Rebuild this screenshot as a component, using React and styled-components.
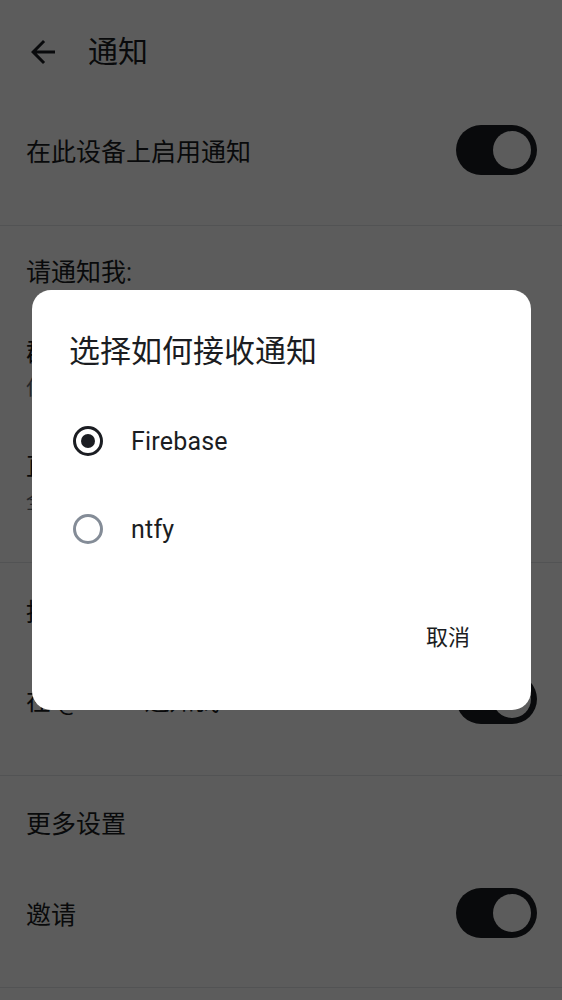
import React, { useState } from 'react';
import styled, { createGlobalStyle } from 'styled-components';

const GlobalStyle = createGlobalStyle`
  html, body {
    margin: 0;
    padding: 0;
    background: #ffffff;
  }
  body {
    font-family: Roboto, "Noto Sans CJK SC", sans-serif;
    color: #1b1d22;
  }
  * {
    box-sizing: border-box;
  }
`;

const Page = styled.div`
  width: 562px;
  height: 1000px;
  overflow: hidden;
  background: #ffffff;
`;

const TopBar = styled.div`
  display: flex;
  align-items: center;
  height: 104px;
  padding-left: 25px;

  .title {
    margin-left: 27px;
    font-size: 30px;
    line-height: 40px;
  }
`;

const BackButton = styled.div`
  display: flex;
  width: 36px;
  height: 36px;
`;

const Section = styled.div`
  border-bottom: 1px solid #e4e6e9;
  padding-bottom: ${(p) => p.$bottom}px;
`;

const SectionLabel = styled.div`
  display: flex;
  align-items: center;
  height: ${(p) => p.$height}px;
  padding-left: 26px;
  font-size: 25px;
`;

const SwitchRow = styled.div`
  display: flex;
  align-items: center;
  justify-content: space-between;
  height: ${(p) => p.$height}px;
  padding: 0 25px 0 26px;
  font-size: 25px;
`;

const Toggle = styled.div`
  display: flex;
  align-items: center;
  justify-content: ${(p) => (p.$on ? 'flex-end' : 'flex-start')};
  width: 81px;
  height: 50px;
  padding: 0 6px;
  border-radius: 25px;
  background: #1b1d22;

  &::after {
    content: '';
    width: 38px;
    height: 38px;
    border-radius: 50%;
    background: #ffffff;
  }
`;

const Item = styled.div`
  display: flex;
  flex-direction: column;
  padding: 22px 26px;

  .title {
    font-size: 25px;
    line-height: 34px;
  }
  .subtitle {
    font-size: 20px;
    line-height: 36px;
    color: #656c76;
  }
`;

const Scrim = styled.div`
  position: fixed;
  inset: 0;
  display: flex;
  align-items: center;
  justify-content: center;
  background: rgba(0, 0, 0, 0.64);
`;

const Dialog = styled.div`
  display: flex;
  flex-direction: column;
  width: 499px;
  height: 420px;
  margin-left: 1px;
  padding-top: 42px;
  border-radius: 19px;
  background: #ffffff;
`;

const DialogTitle = styled.div`
  padding-left: 37px;
  font-size: 31px;
  line-height: 40px;
  color: #1b1d22;
  margin-bottom: 25px;
`;

const Option = styled.div`
  display: flex;
  align-items: center;
  height: 88px;
  padding-left: 41px;
  font-size: 25px;
  letter-spacing: 0.2px;
  color: #1b1d22;
  cursor: pointer;
`;

const Radio = styled.div`
  display: flex;
  align-items: center;
  justify-content: center;
  width: 30px;
  height: 30px;
  margin-right: 28px;
  border-radius: 50%;
  border: 3.4px solid ${(p) => (p.$checked ? '#1b1d22' : '#848c97')};

  &::after {
    content: '';
    display: ${(p) => (p.$checked ? 'block' : 'none')};
    width: 14px;
    height: 14px;
    border-radius: 50%;
    background: #1b1d22;
  }
`;

const Actions = styled.div`
  display: flex;
  justify-content: flex-end;
  margin-top: 38px;
  padding-right: 49px;
`;

const TextButton = styled.div`
  display: flex;
  align-items: center;
  height: 48px;
  padding: 0 12px;
  font-size: 22px;
  color: #1b1d22;
  cursor: pointer;
`;

const options = ['Firebase', 'ntfy'];

export default function App() {
  const [choice, setChoice] = useState('Firebase');

  return (
    <Page>
      <GlobalStyle />
      <TopBar>
        <BackButton>
          <svg width="36" height="36" viewBox="0 0 24 24" fill="#1b1d22">
            <path d="M20 11H7.83l5.59-5.59L12 4l-8 8 8 8 1.41-1.41L7.83 13H20v-2z" />
          </svg>
        </BackButton>
        <div className="title">通知</div>
      </TopBar>

      <Section $bottom={29}>
        <SwitchRow $height={92}>
          在此设备上启用通知
          <Toggle $on />
        </SwitchRow>
      </Section>

      <Section $bottom={20}>
        <SectionLabel $height={88}>请通知我:</SectionLabel>
        <Item>
          <div className="title">群组聊天</div>
          <div className="subtitle">仅提及和关键词</div>
        </Item>
        <Item>
          <div className="title">直接聊天</div>
          <div className="subtitle">全部消息</div>
        </Item>
      </Section>

      <Section $bottom={34}>
        <SectionLabel $height={94}>提及</SectionLabel>
        <SwitchRow $height={84}>
          在 @room 通知我
          <Toggle $on />
        </SwitchRow>
      </Section>

      <Section $bottom={30}>
        <SectionLabel $height={92}>更多设置</SectionLabel>
        <SwitchRow $height={89}>
          邀请
          <Toggle $on />
        </SwitchRow>
      </Section>

      <Scrim>
        <Dialog>
          <DialogTitle>选择如何接收通知</DialogTitle>
          {options.map((name) => (
            <Option key={name} onClick={() => setChoice(name)}>
              <Radio $checked={choice === name} />
              {name}
            </Option>
          ))}
          <Actions>
            <TextButton>取消</TextButton>
          </Actions>
        </Dialog>
      </Scrim>
    </Page>
  );
}
